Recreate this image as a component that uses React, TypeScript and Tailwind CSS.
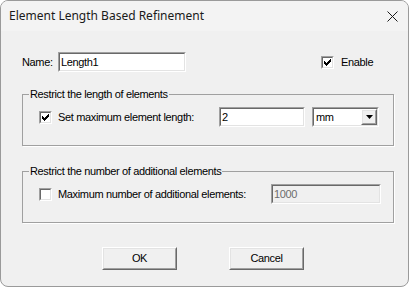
import React from 'react';

const sunken = 'border border-t-[#a0a0a0] border-l-[#a0a0a0] border-b-white border-r-white';
const sunkenInner =
  'border border-t-[#696969] border-l-[#696969] border-b-[#e3e3e3] border-r-[#e3e3e3]';
const raised = 'border border-t-white border-l-white border-b-[#696969] border-r-[#696969]';
const raisedInner =
  'border border-t-[#e3e3e3] border-l-[#e3e3e3] border-b-[#a0a0a0] border-r-[#a0a0a0]';

const CheckBox = ({ checked }: { checked: boolean }) => (
  <div className={`w-[13px] h-[13px] ${sunken} shrink-0`}>
    <div className={`w-full h-full ${sunkenInner} bg-white flex items-center justify-center`}>
      {checked && (
        <svg width="7" height="7" viewBox="0 0 7 7">
          <path d="M0 2h1v1h1v1h1V3h1V2h1V1h1V0h1v3H6v1H5v1H4v1H3v1H2V6H1V5H0z" fill="#000" />
        </svg>
      )}
    </div>
  </div>
);

const TextBox = ({ value, w, disabled }: { value: string; w: string; disabled?: boolean }) => (
  <div className={`${w} h-[20px] ${sunken}`}>
    <div
      className={`w-full h-full ${sunkenInner} ${disabled ? 'bg-[#f0f0f0] text-[#6d6d6d]' : 'bg-white text-black'} pl-[1px] leading-[16px]`}
    >
      {value}
    </div>
  </div>
);

const Button = ({ label }: { label: string }) => (
  <div className={`w-[75px] h-[23px] ${raised}`}>
    <div className={`w-full h-full ${raisedInner} bg-[#f0f0f0] flex items-center justify-center`}>
      {label}
    </div>
  </div>
);

const App = () => {
  return (
    <div
      className="w-[409px] h-[287px] bg-white overflow-hidden"
      style={{ fontFamily: '"Liberation Sans", Arial, sans-serif' }}
    >
      <div className="w-full h-full rounded-[8px] border border-[#9a9a9a] bg-[#f0f0f0] overflow-hidden text-[11px] tracking-[-0.35px] text-black flex flex-col">
        {/* Title bar */}
        <div className="h-[30px] bg-[#f3f3f3] flex items-center justify-between pl-[8px] pr-[10px] shrink-0 tracking-normal">
          <span className="text-[12px] text-[#1a1a1a]" style={{ fontFamily: '"Noto Sans", "Open Sans", sans-serif' }}>
            Element Length Based Refinement
          </span>
          <svg width="11" height="11" viewBox="0 0 11 11">
            <path d="M0.5 0.5L10.5 10.5M10.5 0.5L0.5 10.5" stroke="#1a1a1a" strokeWidth="1" />
          </svg>
        </div>

        <div className="flex-1 pl-[21px] pr-[14px] pt-[21px]">
          {/* Name row */}
          <div className="flex items-center h-[20px]">
            <span className="w-[36px]">Name:</span>
            <TextBox value="Length1" w="w-[128px]" />
            <div className="ml-[135px] flex items-center gap-[7px]">
              <CheckBox checked />
              <span>Enable</span>
            </div>
          </div>

          {/* Group 1 */}
          <fieldset className="mt-[16px] border border-[#a0a0a0] shadow-[1px_1px_0_#fff] px-[6px] h-[58px]">
            <legend className="px-[1px] leading-[13px]">Restrict the length of elements</legend>
            <div className="flex items-center h-[20px] mt-[6px] pl-[10px]">
              <CheckBox checked />
              <span className="ml-[6px] w-[161px]">Set maximum element length:</span>
              <TextBox value="2" w="w-[86px]" />
              <div className={`ml-[7px] w-[67px] h-[20px] ${sunken}`}>
                <div className={`w-full h-full ${sunkenInner} bg-white flex items-center`}>
                  <span className="pl-[2px] flex-1">mm</span>
                  <div className={`w-[16px] h-full ${raised}`}>
                    <div className={`w-full h-full ${raisedInner} bg-[#f0f0f0] flex items-center justify-center`}>
                      <svg width="7" height="4" viewBox="0 0 7 4">
                        <path d="M0 0h7L3.5 4z" fill="#000" />
                      </svg>
                    </div>
                  </div>
                </div>
              </div>
            </div>
          </fieldset>

          {/* Group 2 */}
          <fieldset className="mt-[19px] border border-[#a0a0a0] shadow-[1px_1px_0_#fff] px-[6px] h-[58px]">
            <legend className="px-[1px] leading-[13px]">Restrict the number of additional elements</legend>
            <div className="flex items-center h-[20px] mt-[6px] pl-[10px]">
              <CheckBox checked={false} />
              <span className="ml-[6px] w-[213px]">Maximum number of additional elements:</span>
              <TextBox value="1000" w="w-[110px]" disabled />
            </div>
          </fieldset>

          {/* Buttons */}
          <div className="flex gap-[52px] mt-[24px] pl-[80px]">
            <Button label="OK" />
            <Button label="Cancel" />
          </div>
        </div>
      </div>
    </div>
  );
};

export default App;
